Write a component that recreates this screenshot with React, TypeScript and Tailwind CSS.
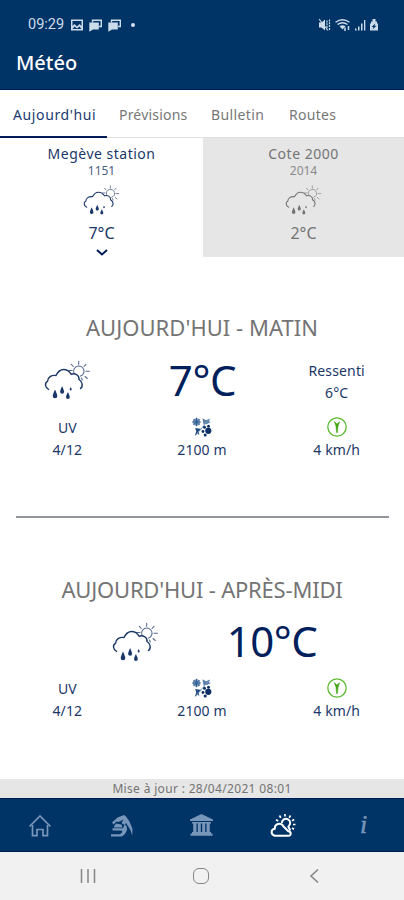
import React from 'react';

const RainIcon: React.FC<{ className: string; stroke?: number }> = ({ className, stroke = 1.4 }) => (
  <svg viewBox="0 0 47 41" preserveAspectRatio="none" fill="none" stroke="currentColor" strokeWidth={stroke} strokeLinecap="round" className={className}>
    <path d="M4.7 29.5C.8 27.5 .5 23 3.6 21.2C3.600 17.500 7.500 14.800 12 15.500C13.500 12.500 16 9.500 19.600 9.500C23 9.500 25.500 11.500 27.300 14.300C31 12.800 35.500 15.300 35 19.500C38.500 21.500 39.300 26.500 36.500 28.500" />
    <g strokeWidth={stroke * 0.75} opacity={0.75}>
      <path d="M29.800 12.500A5.200 5.200 0 1 1 36.500 16.100" />
      <path d="M34.700 1.200v3M27.300 4.300l2 2.200M42 4.300l-2 2.200M42 11.300h3.400M41 16.500l2.300 2M24.500 10.500h3.500M37.500 18l.8 2" />
    </g>
    <g fill="currentColor" stroke="none">
      <path d="M11 29.500q2.300 5 2.300 6.500a2.300 2.300 0 0 1-4.600 0q0-1.500 2.300-6.500z" />
      <path d="M18.100 26q2 4.500 2 5.800a2 2 0 0 1-4 0q0-1.300 2-5.800z" />
      <path d="M23.900 32q1.900 3.700 1.900 5a1.900 1.900 0 0 1-3.800 0q0-1.300 1.900-5z" />
      <path d="M26.700 27q1 1.800 1 2.600a1 1 0 0 1-2 0q0-.8 1-2.600z" />
    </g>
  </svg>
);

const SnowLimitIcon = () => (
  <svg viewBox="0 0 22 20" className="h-5 w-[22px] text-[#0b2f66]" fill="currentColor">
    <circle cx="5.500" cy="5" r="3.800" fill="#7f9bc0" />
    <g stroke="#2c5c92" strokeWidth="1" fill="none">
      <path d="M5.500.800v8.400M1.300 5h8.400M2.600 2.100l5.800 5.800M8.400 2.100L2.600 7.900" />
    </g>
    <path d="M11.500 1.200l3.500 2 4-1.700-1 3 2 .500-4.500 2.300-1.500-.800-1.300 1.500-.7-3z" fill="#5c80a8" />
    <path d="M4.200 11l6.500 1-3 2.400.600 3.800-1.800-2-2.800 2.400 1.500-4z" fill="#244c80" />
    <path d="M17.500 3L4.500 18.500" stroke="#7797b8" strokeWidth="1" />
    <circle cx="13.500" cy="10.300" r="1.500" />
    <circle cx="17.500" cy="9.300" r="1.500" />
    <circle cx="17.300" cy="13.800" r="3.100" />
    <circle cx="12" cy="14.500" r="1.400" />
    <circle cx="14.200" cy="17.900" r="1.500" />
  </svg>
);

const WindIcon = () => (
  <svg viewBox="0 0 20 20" className="size-5" fill="none">
    <circle cx="10" cy="10" r="9.200" stroke="#5cba30" strokeWidth="1.300" />
    <path d="M7.300 4.500L10 7l2.700-2.500L11 9.500l-.5 6h-1L9 9.500z" fill="#43a414" stroke="#43a414" strokeWidth=".5" />
  </svg>
);

const StatusBar = () => (
  <div className="flex h-[50px] items-center justify-between pl-7 pr-6 text-[#cddceb]">
    <div className="flex items-center">
      <span className="w-[37px] whitespace-nowrap font-['Roboto'] text-[14.500px] leading-5">09:29</span>
      <svg viewBox="0 0 12 12" className="ml-[6px] h-3 w-3">
        <path fill="currentColor" fillRule="evenodd" d="M0 .500h12v11H0zM1.500 2v5l2-2 2.500 2.500L8.500 5l2 2V2zM1.500 10h9L8.500 7.500 6 9.500 3.500 7.500z" />
      </svg>
      {[0, 1].map((i) => (
        <svg key={i} viewBox="0 0 13 13" className="ml-[6px] h-[13px] w-[13px]">
          <path d="M3.500 3.500V1.200h8.800v6.300H10" fill="none" stroke="currentColor" strokeWidth="1.400" />
          <path d="M.3 3.500h9.500v7H4L.3 12.800z" fill="currentColor" />
        </svg>
      ))}
      <span className="ml-[10px] size-[4px] rounded-full bg-[#d5e2ef]" />
    </div>
    <svg viewBox="0 0 64 14" className="h-[14px] w-[64px]" fill="currentColor">
      <path d="M3 4.500h2.500L9 1.500v11L5.500 9.500H3z" />
      <path d="M3 1l9 11.500" stroke="currentColor" strokeWidth="1.100" />
      <path d="M11 2.500v9M13.500 1.500v11" stroke="currentColor" strokeWidth="1.200" strokeDasharray="2 .8" />
      <path d="M19.500 4.200q7-5 14 0" fill="none" stroke="currentColor" strokeWidth="1.400" />
      <path d="M21.500 6.500q5-3.500 10 0" fill="none" stroke="currentColor" strokeWidth="1.400" />
      <path d="M23.500 8.300q3-2 6 0L26.500 11.500z" />
      <path d="M29 9.500v3.500M32.500 8v4" stroke="currentColor" strokeWidth="1.500" />
      <path d="M39 10.500h1.500v2H39zM42 8.500h1.500v4H42zM45 5.500h1.500v7H45zM48 2h1.300v10.500H48z" />
      <path fillRule="evenodd" d="M56.500 1h3v2.500h1.500v2h1v7h-8v-7h1v-2h1.500zM59.500 5.500l-4 3.500h2l-1 2.500 4-3.700h-2z" />
    </svg>
  </div>
);

const tabs = [
  { label: "Aujourd'hui", cls: 'w-[107px] pl-[13px] text-[#1c3a70] border-[#001c58]', text: 'tracking-[0.620px]' },
  { label: 'Prévisions', cls: 'w-[93px] pl-[12px] text-[#777] border-transparent', text: 'tracking-[0.200px]' },
  { label: 'Bulletin', cls: 'w-[77px] pl-[11px] text-[#777] border-transparent', text: 'tracking-[0.400px]' },
  { label: 'Routes', cls: 'w-[127px] pl-[12px] text-[#777] border-transparent', text: 'tracking-[0.300px]' },
];

const stations = [
  { name: 'Megève station', altitude: '1151', temp: '7°C', active: true },
  { name: 'Cote 2000', altitude: '2014', temp: '2°C', active: false },
];

const Conditions = () => (
  <div className="mt-[9px] grid grid-cols-3 text-center text-sm leading-[22px] tracking-[0.100px]">
    <div>
      <div className="h-[23px] pt-px">UV</div>
      <div>4/12</div>
    </div>
    <div className="flex flex-col items-center">
      <div className="h-[23px] pt-px"><SnowLimitIcon /></div>
      <div>2100 m</div>
    </div>
    <div className="flex flex-col items-center">
      <div className="h-[23px] pt-px"><WindIcon /></div>
      <div>4 km/h</div>
    </div>
  </div>
);

const App: React.FC = () => {
  return (
    <div className="flex h-[900px] w-[404px] flex-col overflow-hidden bg-white font-['Noto_Sans',sans-serif] text-[#1b3768]">
      <header className="h-[90px] border-b border-[#001a52] bg-[#003366]">
        <StatusBar />
        <h1 className="pl-[16px] text-[20px] font-medium leading-[26px] text-white">Météo</h1>
      </header>

      <nav className="flex h-12 border-b border-[#e0e0e0]">
        {tabs.map((tab) => (
          <div key={tab.label} className={`flex h-12 items-center whitespace-nowrap border-b-2 pt-[3px] text-sm ${tab.cls}`}>
            <span className={tab.text}>{tab.label}</span>
          </div>
        ))}
      </nav>

      {/* Stations */}
      <div className="flex h-[119px]">
        {stations.map((s) => (
          <div key={s.name} className={`flex flex-col items-center ${s.active ? 'w-[203px]' : 'w-[201px] bg-[#e6e6e6] text-[#747474]'}`}>
            <div className="mt-[6px] text-sm leading-5 tracking-[0.500px]">{s.name}</div>
            <div className="text-xs leading-[14px] opacity-80">{s.altitude}</div>
            <RainIcon className="mt-[7px] h-[31px] w-[37px]" stroke={1.4} />
            <div className="mt-[7px] text-base leading-5">{s.temp}</div>
            {s.active && (
              <svg viewBox="0 0 12 7" className="mt-[6px] h-[7px] w-3" fill="none" stroke="#001c58" strokeWidth="2">
                <path d="M1 1l5 4.500L11 1" />
              </svg>
            )}
          </div>
        ))}
      </div>

      {/* Morning */}
      <section className="h-[259px] pt-[55px]">
        <h2 className="text-center text-[22px] leading-[30px] tracking-[0.030px] text-[#747474]">AUJOURD'HUI - MATIN</h2>
        <div className="mt-[11px] grid h-[54px] grid-cols-3">
          <RainIcon className="ml-[44px] mt-[7px] h-[41px] w-[47px]" />
          <div className="mt-px pl-px text-center text-[42px] leading-[52px] tracking-[-0.300px] text-[#00205c]">7°C</div>
          <div className="pt-[7px] text-center text-sm leading-[22px] tracking-[0.150px]">
            <div>Ressenti</div>
            <div>6°C</div>
          </div>
        </div>
        <Conditions />
      </section>

      <hr className="ml-4 mr-[15px] h-0.5 border-0 bg-[#929599]" />

      {/* Afternoon */}
      <section className="h-[261px] pt-[56px]">
        <h2 className="text-center text-[22px] leading-[30px] tracking-[-0.200px] text-[#747474]">AUJOURD'HUI - APRÈS-MIDI</h2>
        <div className="mt-[10px] grid h-[54px] grid-cols-2">
          <RainIcon className="ml-[112px] mt-[8px] h-[41px] w-[47px]" />
          <div className="mt-px pr-[62px] text-center text-[42px] leading-[52px] tracking-[-0.500px] text-[#00205c]">10°C</div>
        </div>
        <Conditions />
      </section>

      <div className="h-[19px] bg-[#e6e6e6] text-center text-xs leading-[19px] tracking-[0.330px] text-[#747474]">Mise à jour : 28/04/2021 08:01</div>

      {/* Bottom navigation */}
      <nav className="grid h-[54px] grid-cols-5 items-center justify-items-center border-y border-[#001a52] bg-[#003366] text-[#7896b9]">
        <svg viewBox="0 0 24 24" className="size-6" fill="none" stroke="currentColor" strokeWidth="1.700">
          <path d="M1.500 13.500L12 3l10.500 10.500" />
          <path d="M4.500 12V22.700h4.500V16.500h6v6.200h4.500V12" />
        </svg>
        <svg viewBox="0 0 24 24" className="size-6" fill="currentColor">
          <path d="M3 9.500L8.500 4.500 15 2l2 1.500 3.500 5 3 7.500-.3 6.500-1.800-5.500-4.400-7-1.500 2L12.500 10l2-3.500-5 2.500-2-.5-3 3z" />
          <path d="M5 13.500l2-3 5.500 1 1 3H5zM3.500 17.500v-2.200H14l1.800-4 2 2.200.2 3.500-2 4-3 2.500H2v-2.300h9l2.500-2.200-1-1.500z" />
        </svg>
        <svg viewBox="0 0 24 24" className="h-6 w-[25px]" fill="currentColor">
          <path d="M12 1L23.500 6.500V8H.5V6.500zM2.500 9h19v1.500h-19zM3.700 10.500h3.300V19H3.700zM8.300 10.500h3V19h-3zM12.700 10.500h3V19h-3zM17 10.500h3.300V19H17zM2.500 19h19v1.500h1.500v2.300H1V20.500h1.500z" />
        </svg>
        <svg viewBox="0 0 26 24" className="h-6 w-[26px] text-white" fill="none" stroke="currentColor" strokeWidth="2">
          <path d="M4.800 22.800C.5 21.500 .5 16.500 4.800 15.800C4.500 10.500 11 9 13.500 13.500L18.300 18.300C21.500 18.500 21.500 22.800 18.500 22.800z" strokeLinejoin="round" />
          <path d="M11.800 10A4.200 4.200 0 1 1 18.300 13.500M18 13l2.300 4.500" />
          <path d="M15 1v2.500M9.500 2.500l1.300 2.200M6 6.800l2.200 1.200M20.500 2.500l-1.300 2.200M24.200 6.500L22 7.700M23 11.500h2.500M22 15l2 1.200" strokeWidth="1.700" />
        </svg>
        <span className="font-['Liberation_Serif',serif] text-[26px] italic leading-6 [-webkit-text-stroke:0.5px_currentColor]">i</span>
      </nav>

      {/* Android navigation */}
      <div className="flex h-12 items-center bg-[#f1f1f1] text-[#858585]">
        <svg viewBox="0 0 16 16" className="ml-[80px] size-4" stroke="currentColor" strokeWidth="1.500">
          <path d="M1.500 1v14M8 1v14M14.500 1v14" />
        </svg>
        <div className="ml-[97px] size-4 rounded-[6px] border-[1.500px] border-current" />
        <svg viewBox="0 0 10 16" className="ml-[100px] h-4 w-[10px]" fill="none" stroke="currentColor" strokeWidth="1.600">
          <path d="M9 1.500L2 8l7 6.500" />
        </svg>
      </div>
    </div>
  );
};

export default App;
